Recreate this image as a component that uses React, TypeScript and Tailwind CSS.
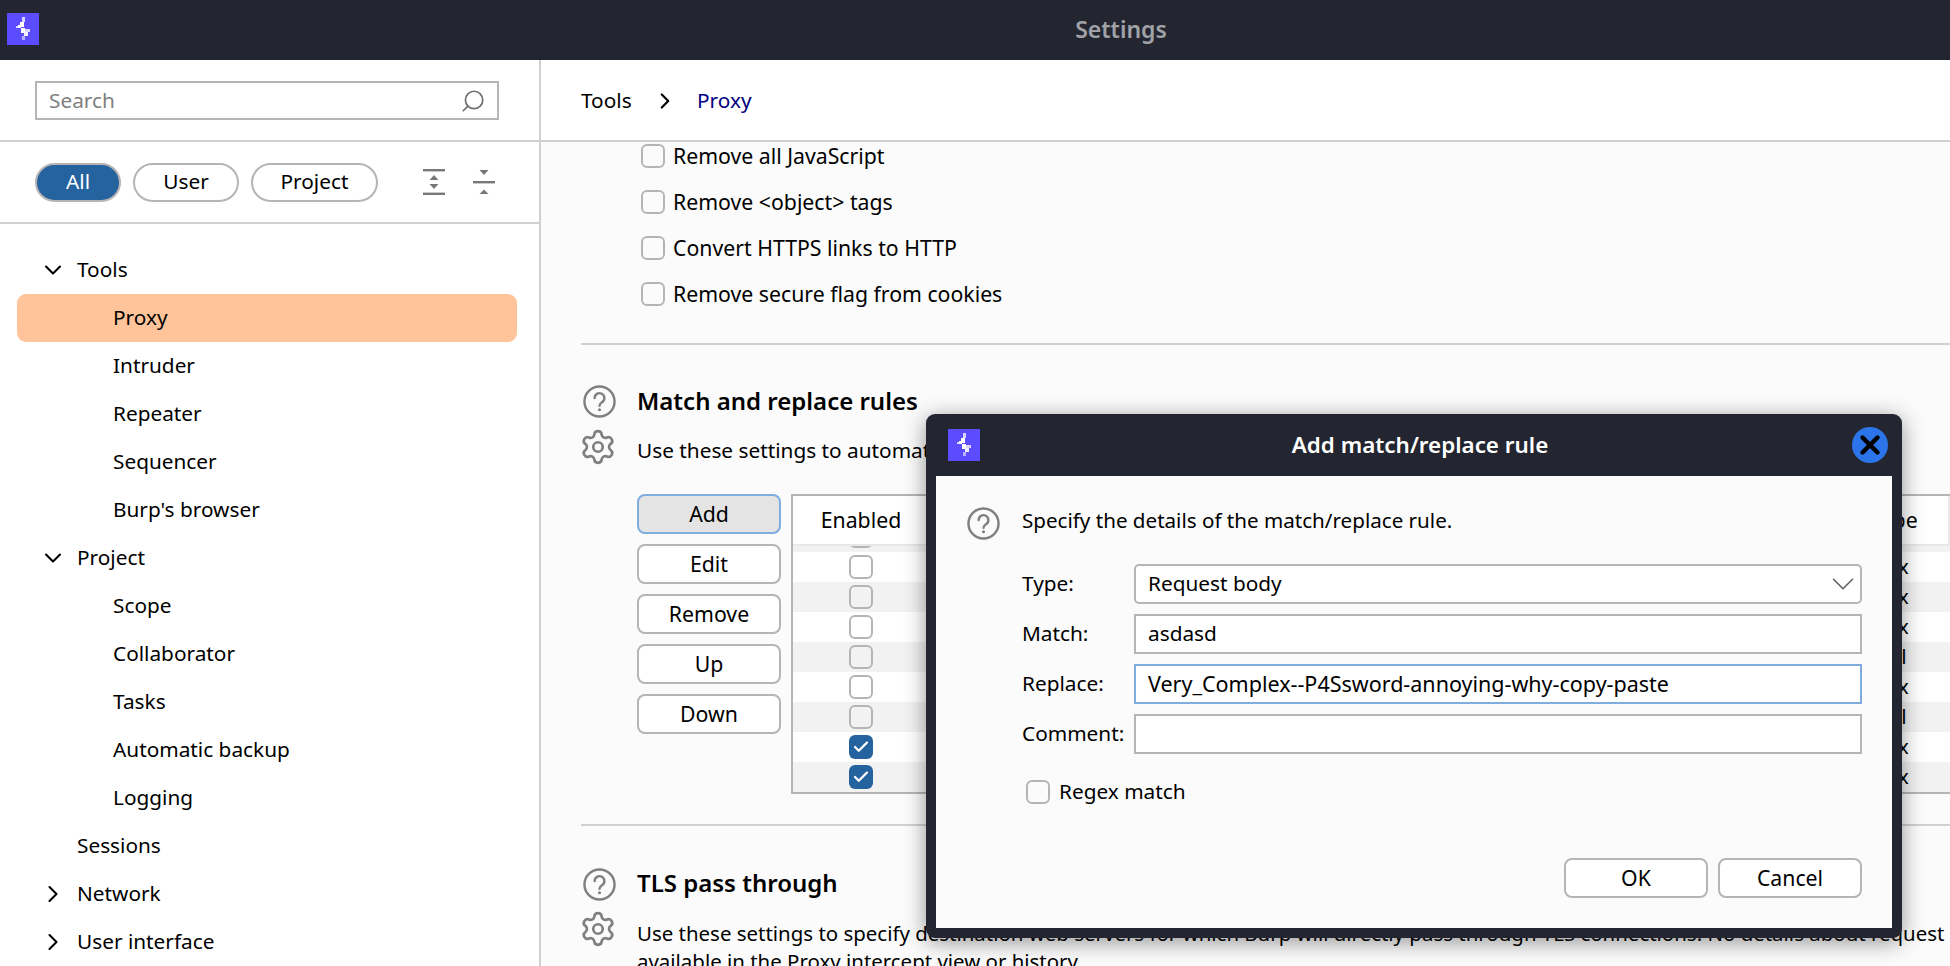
import { Check, ChevronDown, ChevronRight, Search, Settings, X } from 'lucide-react'

const font = 'font-["Noto_Sans",sans-serif]'

// burp logo, the bolt is a low-res bitmap in the real app
function Logo({ className }: { className: string }) {
  return (
    <svg viewBox="0 0 32 32" className={className} shapeRendering="crispEdges">
      <rect width="32" height="32" fill="#5b4dff" />
      <rect x="15" y="4" width="3" height="5" fill="#d8d4ff" />
      <rect x="13" y="9" width="4" height="5" fill="#ffffff" />
      <rect x="9" y="13" width="4" height="2" fill="#d8d4ff" />
      <rect x="11" y="12" width="3" height="3" fill="#ffffff" />
      <rect x="14" y="15" width="4" height="5" fill="#ffffff" />
      <rect x="18" y="16" width="5" height="3" fill="#d8d4ff" />
      <rect x="17" y="19" width="4" height="4" fill="#f0eeff" />
      <rect x="15" y="23" width="3" height="4" fill="#b8b0ff" />
    </svg>
  )
}

function HelpIcon({ className }: { className: string }) {
  return (
    <svg viewBox="0 0 34 34" fill="none" className={className}>
      <circle cx="17" cy="17" r="15.5" stroke="#808080" strokeWidth="2.5" />
      <path d="M12 13.5a5 5 0 1 1 7.6 4.2c-1.6 1-2.6 1.8-2.6 3.6" stroke="#808080" strokeWidth="2.5" strokeLinecap="round" />
      <circle cx="17" cy="25.5" r="1.6" fill="#808080" />
    </svg>
  )
}

function CheckBox({ checked = false }: { checked?: boolean }) {
  if (checked) {
    return (
      <span className="flex h-6 w-6 items-center justify-center rounded-[6px] bg-[#25639f]">
        <Check size={18} strokeWidth={3} color="#ffffff" />
      </span>
    )
  }
  return <span className="block h-6 w-6 shrink-0 rounded-[6px] border-2 border-[#b8b4b4] bg-transparent" />
}

function CheckRow({ label }: { label: string }) {
  return (
    <div className="flex h-[46px] items-center gap-2 pl-[60px] text-[21.25px]">
      <CheckBox />
      <span>{label}</span>
    </div>
  )
}

function Pill({ label, width, active = false }: { label: string; width: string; active?: boolean }) {
  return (
    <div className={`flex h-[39px] items-center justify-center rounded-full border-2 border-[#b8b4b4] ${width} ${active ? 'bg-[#25639f] text-white' : 'bg-white text-black'}`}>
      {label}
    </div>
  )
}

function TreeRow({ label, open, child }: { label: string; open?: boolean; child?: boolean }) {
  return (
    <div className={`relative flex h-12 items-center ${child ? 'pl-[113px]' : 'pl-[77px]'}`}>
      {open === true && <ChevronDown size={28} strokeWidth={1.8} className="absolute left-[39px] top-[10px]" />}
      {open === false && <ChevronRight size={28} strokeWidth={1.8} className="absolute left-[39px] top-[10px]" />}
      {label}
    </div>
  )
}

function Sidebar() {
  return (
    <aside className="flex w-[541px] shrink-0 flex-col border-r-2 border-[#d0d0d0] bg-white">
      <div className="flex h-[82px] items-center border-b-2 border-[#d0d0d0] pl-[35px] pt-[1px]">
        <div className="flex h-[39px] w-[464px] items-center justify-between border-2 border-[#b8b4b4] pl-[12px] pr-[11px] text-[#808080]">
          Search
          <Search size={26} strokeWidth={1.6} className="-scale-x-100" color="#707070" />
        </div>
      </div>
      <div className="flex h-[82px] items-center border-b-2 border-[#d0d0d0] pl-[35px]">
        <div className="flex gap-3">
          <Pill label="All" width="w-[86px]" active />
          <Pill label="User" width="w-[106px]" />
          <Pill label="Project" width="w-[127px]" />
        </div>
        <svg viewBox="0 0 24 28" className="ml-[44px] h-7 w-6" fill="#787878">
          <rect x="1" y="1" width="22" height="2.4" />
          <rect x="1" y="24.6" width="22" height="2.4" />
          <path d="M12 7l4.5 5h-9zM12 21l4.5-5h-9z" />
        </svg>
        <svg viewBox="0 0 24 28" className="ml-[26px] h-7 w-6" fill="#787878">
          <rect x="1" y="13" width="22" height="2.4" />
          <path d="M12 7l-4.5-5h9zM12 21.5l4.5 4.5h-9z" />
        </svg>
      </div>
      <div className="pt-[22px]">
        <TreeRow label="Tools" open />
        <div className="flex h-12 items-center">
          <div className="mx-[17px] flex h-12 w-[500px] items-center rounded-[9px] bg-[#ffc499] pl-[96px]">Proxy</div>
        </div>
        <TreeRow label="Intruder" child />
        <TreeRow label="Repeater" child />
        <TreeRow label="Sequencer" child />
        <TreeRow label="Burp's browser" child />
        <TreeRow label="Project" open />
        <TreeRow label="Scope" child />
        <TreeRow label="Collaborator" child />
        <TreeRow label="Tasks" child />
        <TreeRow label="Automatic backup" child />
        <TreeRow label="Logging" child />
        <TreeRow label="Sessions" />
        <TreeRow label="Network" open={false} />
        <TreeRow label="User interface" open={false} />
      </div>
    </aside>
  )
}

function SideButton({ label, focused = false }: { label: string; focused?: boolean }) {
  return (
    <div className={`flex h-10 w-[144px] items-center justify-center rounded-lg border-2 text-[21.25px] ${focused ? 'border-[#7fadde] bg-[#e4e4e4]' : 'border-[#b8b4b4] bg-white'}`}>
      {label}
    </div>
  )
}

const rules = [false, false, false, false, false, false, true, true]
const matchTypes = ['Regex', 'Regex', 'Regex', 'Literal', 'Regex', 'Literal', 'Regex', 'Regex']

function RulesTable() {
  return (
    <div className="h-[300px] flex-1 overflow-hidden border-y-2 border-l-2 border-[#b8b4b4]">
      <div className="flex h-12 items-center justify-between border-r-2 border-[#e8e8e8] bg-white text-[21.25px]">
        <div className="w-[136px] text-center">Enabled</div>
        <div className="w-[108px] text-center">Type</div>
      </div>
      {/* row scrolled almost out of view */}
      <div className="flex h-2 justify-center overflow-hidden border-t-2 border-[#e8e8e8] bg-[#f2f2f2]">
        <div className="-mt-[22px] flex w-[136px] justify-center self-start">
          <CheckBox />
        </div>
        <div className="flex-1" />
      </div>
      {rules.map((checked, i) => (
        <div key={i} className={`flex h-[30px] items-center justify-between ${i % 2 === 0 ? 'bg-white' : 'bg-[#f2f2f2]'}`}>
          <div className="flex w-[136px] justify-center">
            <CheckBox checked={checked} />
          </div>
          <div className="w-[106px] pl-[5px]">
            <span className={matchTypes[i] === 'Literal' ? 'ml-[-3px]' : ''}>{matchTypes[i]}</span>
          </div>
        </div>
      ))}
    </div>
  )
}

function Field({ label, value, focused = false, select = false, big = false }: { label: string; value: string; focused?: boolean; select?: boolean; big?: boolean }) {
  return (
    <div className="flex h-10 items-center">
      <div className="w-[112px]">{label}</div>
      <div className={`flex h-10 w-[728px] items-center justify-between border-2 px-[12px] ${focused ? 'border-[#7fadde]' : 'border-[#b8b4b4]'} ${select ? 'rounded-[5px]' : ''} ${big ? 'text-[21.5px]' : ''} bg-white`}>
        {value}
        {select && <ChevronDown size={38} strokeWidth={1} color="#606060" className="-mr-[14px]" />}
      </div>
    </div>
  )
}

function Dialog() {
  return (
    <div className="absolute left-[926px] top-[414px] flex h-[524px] w-[976px] flex-col rounded-[9px] bg-[#232630] px-[10px] pb-[10px] shadow-[0_4px_22px_rgba(0,0,0,0.42)]">
      <div className="relative flex h-[62px] shrink-0 items-center justify-center pl-[12px] text-[22.4px] font-semibold text-white">
        <Logo className="absolute left-[12px] top-[15px] h-8 w-8" />
        Add match/replace rule
        <div className="absolute left-[916px] top-[13px] flex h-9 w-9 items-center justify-center rounded-full bg-[#2b74ea]">
          <X size={30} strokeWidth={3.5} color="#000000" />
        </div>
      </div>
      <div className="relative flex-1 bg-[#fbfbfb] pl-[86px] text-black">
        <HelpIcon className="absolute left-[31px] top-[31px] h-[33px] w-[33px]" />
        <div className="mt-[30px] flex h-[28px] items-center text-[20.6px]">Specify the details of the match/replace rule.</div>
        <div className="mt-[30px] flex flex-col gap-[10px]">
          <Field label="Type:" value="Request body" select />
          <Field label="Match:" value="asdasd" />
          <Field label="Replace:" value="Very_Complex--P4Ssword-annoying-why-copy-paste" focused big />
          <Field label="Comment:" value="" />
        </div>
        <div className="mt-[26px] flex h-6 items-center gap-[9px] pl-[4px]">
          <CheckBox />
          Regex match
        </div>
        <div className="absolute bottom-[30px] right-[30px] flex gap-[10px] text-[21.25px]">
          <div className="flex h-10 w-[144px] items-center justify-center rounded-lg border-2 border-[#b8b4b4] bg-white">OK</div>
          <div className="flex h-10 w-[144px] items-center justify-center rounded-lg border-2 border-[#b8b4b4] bg-white">Cancel</div>
        </div>
      </div>
    </div>
  )
}

export default function App() {
  return (
    <div className={`relative flex h-[966px] w-[1950px] flex-col overflow-hidden bg-white text-[20.8px] text-black ${font}`}>
      <header className="relative flex h-[60px] shrink-0 items-center justify-center bg-[#232630] pb-[1px] pl-[292px] text-[23px] font-semibold text-[#a0a2a8]">
        <Logo className="absolute left-[7px] top-[13px] h-8 w-8" />
        Settings
      </header>
      <div className="flex flex-1 overflow-hidden">
        <Sidebar />
        <main className="flex-1 overflow-hidden bg-[#fbfbfb]">
          <div className="relative z-10 flex h-[82px] items-center border-b-2 border-[#d0d0d0] bg-white pl-[40px] pt-[1px]">
            <span className="w-[71px]">Tools</span>
            <ChevronRight size={26} strokeWidth={2} />
            <span className="ml-[19px] text-[#000080]">Proxy</span>
          </div>
          <div className="-mt-[9px]">
            <div className="pl-[40px]">
              <CheckRow label="Remove all JavaScript" />
              <CheckRow label="Remove <object> tags" />
              <CheckRow label="Convert HTTPS links to HTTP" />
              <CheckRow label="Remove secure flag from cookies" />
            </div>
            <div className="ml-[40px] mt-[26px] h-[2px] bg-[#d0d0d0]" />
            <div className="relative pl-[96px] pt-[38px]">
              <HelpIcon className="absolute left-[42px] top-[40px] h-[33px] w-[33px]" />
              <h2 className="h-[36px] text-[24px] font-semibold leading-[36px]">Match and replace rules</h2>
              <Settings size={38} strokeWidth={1.7} color="#808080" className="absolute left-[38px] top-[83px]" />
              <div className="mt-[17px] h-[28px] whitespace-nowrap leading-[28px]">Use these settings to automatically replace parts of HTTP messages passing through the Proxy.</div>
              <div className="mt-[30px] flex gap-[10px]">
                <div className="flex flex-col gap-[10px]">
                  <SideButton label="Add" focused />
                  <SideButton label="Edit" />
                  <SideButton label="Remove" />
                  <SideButton label="Up" />
                  <SideButton label="Down" />
                </div>
                <RulesTable />
              </div>
            </div>
            <div className="ml-[40px] mt-[30px] h-[2px] bg-[#d0d0d0]" />
            <div className="relative pl-[96px] pt-[39px]">
              <HelpIcon className="absolute left-[42px] top-[42px] h-[33px] w-[33px]" />
              <h2 className="h-[36px] text-[24px] font-semibold leading-[36px]">TLS pass through</h2>
              <Settings size={38} strokeWidth={1.7} color="#808080" className="absolute left-[38px] top-[84px]" />
              <div className="mt-[18px] whitespace-nowrap text-[20.45px] leading-[28px]">
                Use these settings to specify destination web servers for which Burp will directly pass through TLS connections. No details about request
                <br />
                available in the Proxy intercept view or history.
              </div>
            </div>
          </div>
        </main>
      </div>
      <Dialog />
    </div>
  )
}
